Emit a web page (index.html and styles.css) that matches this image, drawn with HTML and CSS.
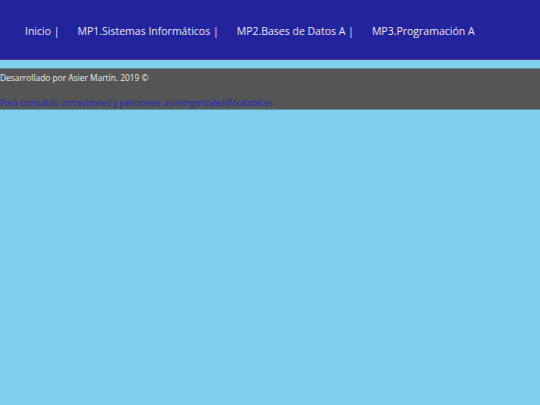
FILE: index.html
```html
<!DOCTYPE html>
<html lang="es">
<head>
<meta charset="utf-8">
<title>Asier Martín</title>
<link rel="stylesheet" href="styles.css">
</head>
<body>
<header class="top">
  <nav class="menu">
    <a class="item" href="#">Inicio |</a>
    <a class="item" href="#">MP1.Sistemas Informáticos |</a>
    <a class="item" href="#">MP2.Bases de Datos A |</a>
    <a class="item" href="#">MP3.Programación A</a>
  </nav>
</header>
<footer class="foot">
  <p class="credit">Desarrollado por Asier Martín. 2019 ©</p>
  <p class="contact">Para consultas, correcciones y peticiones: asiermgonzalez@outlook.es</p>
</footer>
</body>
</html>
```
FILE: styles.css
```css
html, body {
  margin: 0;
  padding: 0;
}
body {
  background: #80d0f0;
  font-family: "Open Sans", sans-serif;
  min-height: 405px;
}
.top {
  background: #23239e;
  height: 60px;
  border-bottom: 1px solid #5a2a8a;
  display: flex;
  align-items: center;
  padding-top: 2px;
  box-sizing: border-box;
}
.menu {
  display: flex;
  gap: 18px;
  padding-left: 25px;
}
.item {
  color: #e6e6f0;
  text-decoration: none;
  font-size: 10.5px;
}
.foot {
  margin-top: 8px;
  background: #555555;
  border-top: 1px solid #5f8f9f;
  border-bottom: 1px solid #5f8f9f;
  height: 42px;
  display: flex;
  flex-direction: column;
  justify-content: space-between;
  padding: 3px 0 1px;
  box-sizing: border-box;
  font-size: 8.4px;
}
.foot p {
  margin: 0;
}
.credit {
  color: #ececec;
}
.contact {
  color: #2222cc;
}
```
